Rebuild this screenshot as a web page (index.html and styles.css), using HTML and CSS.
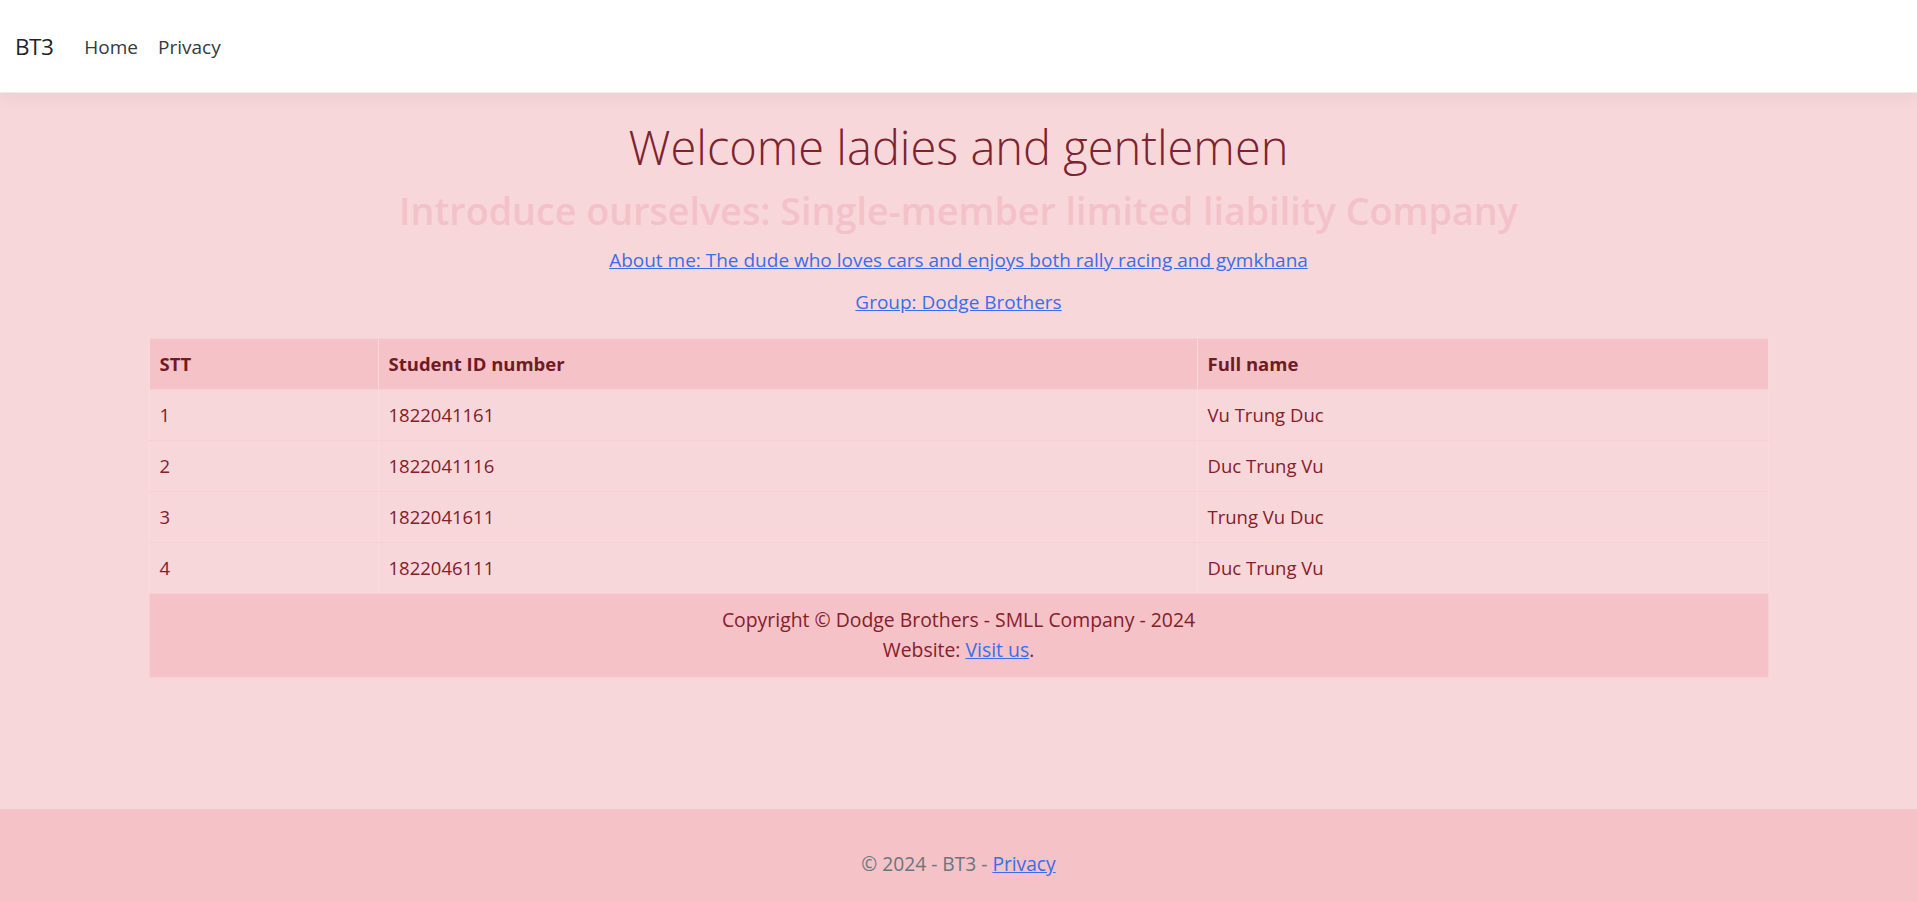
FILE: index.html
```html
<!DOCTYPE html>
<html lang="en">
<head>
<meta charset="utf-8">
<title>BT3</title>
<link rel="stylesheet" href="styles.css">
</head>
<body>
<header class="navbar">
  <a class="brand" href="#">BT3</a>
  <nav class="nav">
    <a class="nav-link" href="#">Home</a>
    <a class="nav-link" href="#">Privacy</a>
  </nav>
</header>
<main class="main">
  <div class="container">
    <h1 class="title">Welcome ladies and gentlemen</h1>
    <h2 class="subtitle">Introduce ourselves: Single-member limited liability Company</h2>
    <p class="link-line first"><a href="#">About me: The dude who loves cars and enjoys both rally racing and gymkhana</a></p>
    <p class="link-line"><a href="#">Group: Dodge Brothers</a></p>
    <table class="table">
      <thead>
        <tr><th class="c1">STT</th><th class="c2">Student ID number</th><th class="c3">Full name</th></tr>
      </thead>
      <tbody>
        <tr><td>1</td><td>1822041161</td><td>Vu Trung Duc</td></tr>
        <tr><td>2</td><td>1822041116</td><td>Duc Trung Vu</td></tr>
        <tr><td>3</td><td>1822041611</td><td>Trung Vu Duc</td></tr>
        <tr><td>4</td><td>1822046111</td><td>Duc Trung Vu</td></tr>
      </tbody>
      <tfoot>
        <tr><td colspan="3" class="tfoot-cell">Copyright © Dodge Brothers - SMLL Company - 2024<br>Website: <a href="#">Visit us</a>.</td></tr>
      </tfoot>
    </table>
  </div>
</main>
<footer class="footer">
  © 2024 - BT3 - <a href="#">Privacy</a>
</footer>
</body>
</html>
```
FILE: styles.css
```css
* { box-sizing: border-box; }
html, body { margin: 0; padding: 0; }
body {
  font-family: "Open Sans", "Noto Sans", sans-serif;
  font-size: 20px;
  line-height: 1.5;
  color: #842029;
  background: #f8d7da;
  min-height: 100vh;
  display: flex;
  flex-direction: column;
}
a { color: #3a6ee8; text-decoration: underline; }

.navbar {
  height: 93px;
  background: #fff;
  border-bottom: 1px solid #ececec;
  box-shadow: 0 5px 15px rgba(0,0,0,.05);
  display: flex;
  align-items: center;
  padding: 2px 15px 0;
  position: relative;
  z-index: 1;
}
.brand {
  color: #212529;
  text-decoration: none;
  font-size: 22.5px;
  margin-right: 31px;
  letter-spacing: -0.5px;
}
.nav { display: flex; gap: 20px; }
.nav-link {
  color: #333a40;
  text-decoration: none;
  font-size: 19px;
}

.main { flex: 1; padding-top: 24px; }
.container { width: 1620px; margin: 0 auto; text-align: center; }
.title {
  font-size: 47px;
  font-weight: 300;
  line-height: 60px;
  margin: 0 0 10px;
  color: #7d2330;
}
.subtitle {
  font-size: 37.7px;
  font-weight: 600;
  line-height: 48px;
  margin: 0 0 10px;
  color: #f4c1c8;
}
.link-line { margin: 0 0 12px; font-size: 19px; line-height: 30px; }
.link-line.first { margin-bottom: 12px; }
.link-line:not(.first) { margin-bottom: 21px; }

.table {
  width: 100%;
  border-collapse: collapse;
  text-align: left;
  font-size: 18.5px;
}
.table th, .table td {
  padding: 10px 10px;
  line-height: 30px;
  border: 1px solid #f6d0d4;
}
.table thead th {
  background: #f5c2c7;
  font-weight: 700;
  color: #6f1a24;
  border-color: #f6d0d4 #f8d8db;
}
.c1 { width: 229px; }
.c2 { width: 819px; }
.table tbody td { color: #842029; border-left-color: #f8dcdf; border-right-color: #f8dcdf; border-top-color: #f2cfd3; }
.tfoot-cell {
  background: #f5c2c7;
  text-align: center;
  font-size: 19.4px;
  padding: 11px 10px 12px !important;
  border-color: #f0c8cc;
}

.footer {
  background: #f5c2c7;
  border-top: 1px solid #ecc9cd;
  color: #6c757d;
  text-align: center;
  line-height: 75px;
  padding: 16px 0 1px;
  font-size: 19.2px;
}
```
